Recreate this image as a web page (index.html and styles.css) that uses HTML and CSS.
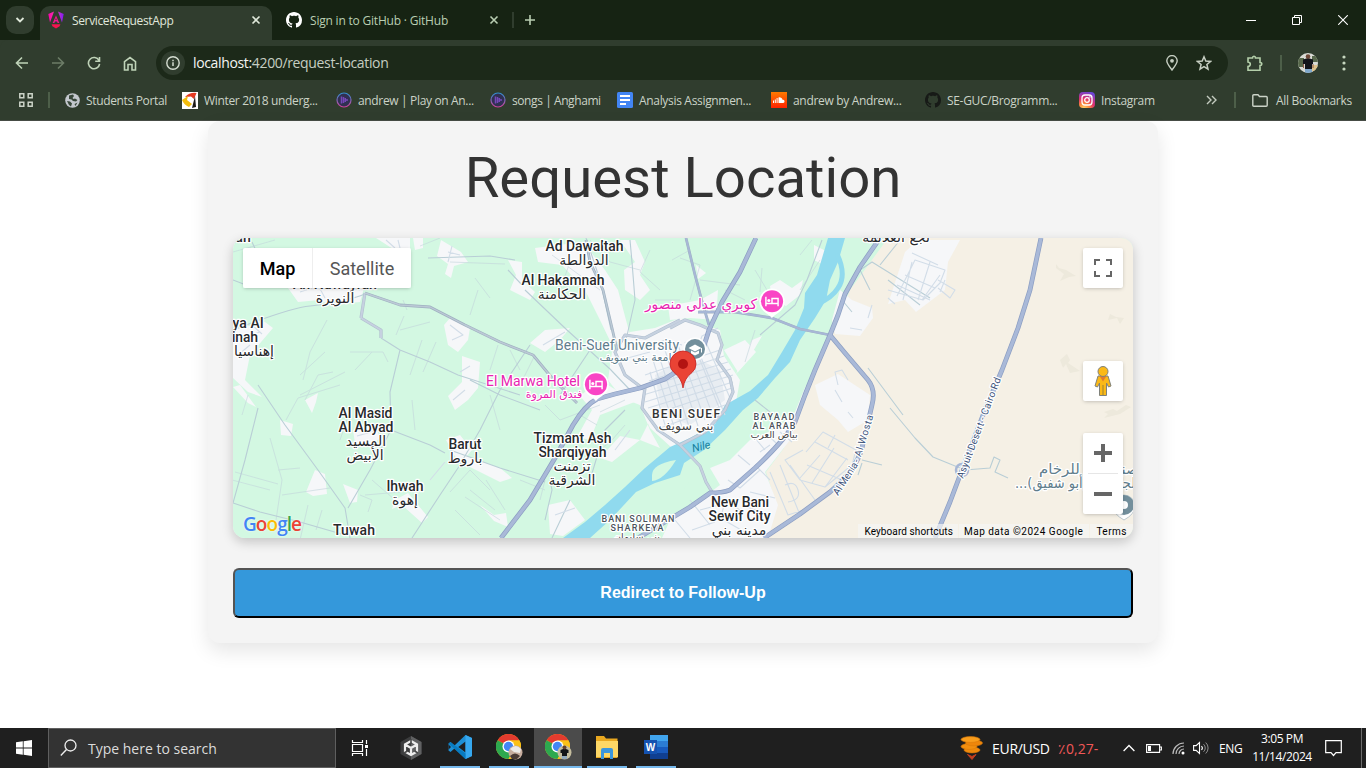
FILE: index.html
```html
<!DOCTYPE html>
<html lang="en">
<head>
<meta charset="utf-8">
<title>ServiceRequestApp</title>
<link rel="stylesheet" href="styles.css">
</head>
<body>
<svg class="defs" width="0" height="0">
  <defs>
    <linearGradient id="ng" x1="0" y1="0" x2="1" y2="0"><stop offset="0" stop-color="#f0a"/><stop offset=".45" stop-color="#f23ab0"/><stop offset="1" stop-color="#7b1cf5"/></linearGradient>
    <linearGradient id="ang" x1="0" y1="0" x2="0" y2="1"><stop offset="0" stop-color="#2f8fd0"/><stop offset="1" stop-color="#d0409c"/></linearGradient>
    <linearGradient id="sc" x1="0" y1="0" x2="0" y2="1"><stop offset="0" stop-color="#ff7a00"/><stop offset="1" stop-color="#ff2200"/></linearGradient>
    <radialGradient id="ig" cx=".3" cy="1.05" r="1.1"><stop offset="0" stop-color="#ffd86b"/><stop offset=".3" stop-color="#fb8b3c"/><stop offset=".6" stop-color="#e0306e"/><stop offset="1" stop-color="#6a45d8"/></radialGradient>
    <symbol id="octocat" viewBox="0 0 16 16"><path d="M8 0C3.58 0 0 3.58 0 8c0 3.54 2.29 6.53 5.47 7.59.4.07.55-.17.55-.38 0-.19-.01-.82-.01-1.49-2.01.37-2.53-.49-2.69-.94-.09-.23-.48-.94-.82-1.13-.28-.15-.68-.52-.01-.53.63-.01 1.08.58 1.23.82.72 1.21 1.87.87 2.33.66.07-.52.28-.87.51-1.07-1.78-.2-3.64-.89-3.64-3.95 0-.87.31-1.59.82-2.15-.08-.2-.36-1.02.08-2.12 0 0 .67-.21 2.2.82.64-.18 1.32-.27 2-.27s1.36.09 2 .27c1.53-1.04 2.2-.82 2.2-.82.44 1.1.16 1.92.08 2.12.51.56.82 1.27.82 2.15 0 3.07-1.87 3.75-3.65 3.95.29.25.54.73.54 1.48 0 1.07-.01 1.93-.01 2.2 0 .21.15.46.55.38A8.01 8.01 0 0 0 16 8c0-4.42-3.58-8-8-8z"/></symbol>
    <symbol id="anghami" viewBox="0 0 16 16"><circle cx="8" cy="8" r="7" fill="#303052" stroke="url(#ang)" stroke-width="1.200"/><path d="M5.500 4.500v7M7.500 5v6M9.300 6v4M11 7v2" stroke="#7648b8" stroke-width="1.500"/></symbol>
    <symbol id="chrome" viewBox="0 0 24 24"><circle cx="12" cy="12" r="12" fill="#fbc116"/><path d="M12 12 1.600 6A12 12 0 0 1 22.400 6z" fill="#e33b2e"/><path d="M1.600 6A12 12 0 0 0 12 24l5-9-5-3z" fill="#2da94f"/><path d="M12 6h10.400A12 12 0 0 1 12 24l5.200-9z" fill="#fbc116"/><circle cx="12" cy="12" r="5.800" fill="#fff"/><circle cx="12" cy="12" r="4.500" fill="#4286f5"/></symbol>
    <symbol id="bed" viewBox="-12 -12 24 28"><path d="M0 15.500C-2 11.500-11.500 9.500-11.500 0a11.500 11.500 0 0 1 23 0C11.500 9.500 2 11.500 0 15.500z" fill="#fff"/><circle r="10" fill="#f945c5"/><path d="M-5.500-4V4.500M-5.500 2H5.500V4.500M5.500 2V-2.500H0V2" fill="none" stroke="#fff" stroke-width="1.300"/><circle cx="-2.900" cy="-.7" r="1.400" fill="#fff"/></symbol>
  </defs>
</svg>

<header class="browser">
  <div class="tabstrip">
    <div class="tabsearch"><svg width="10" height="10" viewBox="0 0 10 10"><path d="M1.500 3 5 6.500 8.500 3" fill="none" stroke="#dfe8da" stroke-width="1.800"/></svg></div>
    <div class="tab active">
      <svg width="16" height="18" viewBox="0 0 16 18"><path d="M.3 3 6 .5 2 11.500zM15.700 3 10 .5 14 11.500z" fill="url(#ng)"/><path d="M8 4.500 11.300 12H9.600L9 10.500H7L6.400 12H4.700zM8 7l-.7 2h1.400z" fill="#f0178f"/><path d="M3.600 13.300h8.800l-.8 2L8 17.500 4.400 15.300z" fill="#f51450"/></svg>
      <span class="tabtitle t1">ServiceRequestApp</span>
      <svg class="close" width="10" height="10" viewBox="0 0 10 10"><path d="M1.500 1.500l7 7M8.500 1.500l-7 7" stroke="#dfe8da" stroke-width="1.600"/></svg>
    </div>
    <div class="tab second">
      <svg width="16" height="16" fill="#fff"><use href="#octocat"/></svg>
      <span class="tabtitle t2">Sign in to GitHub · GitHub</span>
      <svg class="close" width="10" height="10" viewBox="0 0 10 10"><path d="M1.500 1.500l7 7M8.500 1.500l-7 7" stroke="#b9ceb2" stroke-width="1.600"/></svg>
    </div>
    <div class="newtab"><svg width="12" height="12" viewBox="0 0 12 12"><path d="M6 1v10M1 6h10" stroke="#b9ceb2" stroke-width="1.600"/></svg></div>
    <div class="winbtns">
      <svg width="10" height="12" viewBox="0 0 10 12"><path d="M0 6.500h10" stroke="#fff"/></svg>
      <svg width="10" height="10" viewBox="0 0 10 10"><path d="M.5 2.500h7v7h-7zM2.500 2.500v-2h7v7h-2" fill="none" stroke="#fff"/></svg>
      <svg width="10" height="10" viewBox="0 0 10 10"><path d="M.2.2l9.600 9.600M9.800.2.200 9.800" stroke="#fff" stroke-width="1.100"/></svg>
    </div>
  </div>

  <div class="toolbar">
    <div class="nav">
      <svg width="14" height="14" viewBox="0 0 14 14"><path d="M13 7H1.500M7 1.500 1.500 7 7 12.500" fill="none" stroke="#bfd3b8" stroke-width="1.600"/></svg>
      <svg width="14" height="14" viewBox="0 0 14 14"><path d="M1 7h11.500M7 1.500 12.500 7 7 12.500" fill="none" stroke="#6c7c67" stroke-width="1.600"/></svg>
      <svg width="14" height="14" viewBox="0 0 14 14"><path d="M12 4.500A5.600 5.600 0 1 0 12.600 7.800M12.500 1v4.300H8.200" fill="none" stroke="#bfd3b8" stroke-width="1.600"/></svg>
      <svg width="14" height="15" viewBox="0 0 14 15"><path d="M1.500 5.700 7 1.500l5.500 4.200V14H9V8.500H5V14H1.500z" fill="none" stroke="#bfd3b8" stroke-width="1.600"/></svg>
    </div>
    <div class="omnibox">
      <span class="info"><svg width="14" height="14" viewBox="0 0 14 14"><circle cx="7" cy="7" r="6.200" fill="none" stroke="#d5ddd1" stroke-width="1.400"/><path d="M7 6.300V10M7 3.700v1.500" stroke="#d5ddd1" stroke-width="1.500"/></svg></span>
      <span class="url"><b>localhost:</b>4200/request-location</span>
      <svg class="pin" width="12" height="16" viewBox="0 0 12 16"><path d="M6 15C3 11 .8 8.500.8 5.800a5.200 5.200 0 0 1 10.400 0C11.200 8.500 9 11 6 15z" fill="none" stroke="#c6cec2" stroke-width="1.400"/><circle cx="6" cy="5.800" r="1.900" fill="#c6cec2"/></svg>
      <svg width="16" height="16" viewBox="0 0 16 16"><path d="M8 1.800l1.800 4.300 4.700.4-3.600 3 1.100 4.600L8 11.700l-4 2.400 1.100-4.600-3.600-3 4.700-.4z" fill="none" stroke="#c6cec2" stroke-width="1.500"/></svg>
    </div>
    <div class="tools">
      <svg width="17" height="17" viewBox="0 0 17 17"><path d="M2 3H6.500Q6.500 1.300 8 1.300T9.500 3H14V7.500Q15.800 7.500 15.800 9T14 10.500V15.300H2V11.500Q4.300 11 4.300 9.200T2 7z" fill="none" stroke="#b5d0ab" stroke-width="1.600"/></svg>
      <i class="rule"></i>
      <svg class="avatar" width="20" height="20" viewBox="0 0 20 20"><clipPath id="av"><circle cx="10" cy="10" r="10"/></clipPath><g clip-path="url(#av)"><path fill="#d9dbd5" d="M0 0h20v20H0z"/><path d="M0 5h6v9H0zM14 3h6v6h-6z" fill="#57684b"/><path d="M14 12h6v6h-6z" fill="#dfc38b"/><path d="M5 6.500 10 5l5 1.500V11H5z" fill="#11141a"/><path d="M7 9h7v7H7z" fill="#11141a"/><circle cx="10" cy="3.500" r="2.300" fill="#6d4737"/><path d="M7 16h7v4H7z" fill="#7fa8cb"/><path d="M5.500 11v4M15 11v4" stroke="#8c5d49"/></g></svg>
      <svg width="4" height="16" viewBox="0 0 4 16" fill="#c6d6bf"><circle cx="2" cy="2" r="1.600"/><circle cx="2" cy="8" r="1.600"/><circle cx="2" cy="14" r="1.600"/></svg>
    </div>
  </div>

  <nav class="bookmarks">
    <div class="apps"><svg width="14" height="14" viewBox="0 0 14 14"><path d="M.8.8h4v4h-4zM9.200.8h4v4h-4zM.8 9.200h4v4h-4zM9.200 9.200h4v4h-4z" fill="none" stroke="#cbd3c7" stroke-width="1.500"/></svg><i class="rule"></i></div>
    <a class="bm b1"><svg width="15" height="15" viewBox="0 0 15 15"><circle cx="7.500" cy="7.500" r="7.300" fill="#c3c7cd"/><path d="M4 2.500 8 1.500 9 3 7.500 5 8.500 6 10 5.500 12.500 7 11 8.500 8 8 6.500 6.500 4 6zM2 8l3 .5 2 2-1 3L4 12zM9.500 11l3-1.500-2 3.500z" fill="#38473a"/></svg><span>Students Portal</span></a>
    <a class="bm b2"><svg width="16" height="17" viewBox="0 0 16 17"><path d="M0 0h16v17H0z" fill="#fff"/><path d="M3 5Q8 0 14.500 1L12 7 9 4.500z" fill="#e43a22"/><path d="M0 8 6 4 5 8 10 12 7 15Q2 13 0 8z" fill="#f3bd0d"/><path d="M13 4 14 15 10 16 11 12z" fill="#1d1b19"/></svg><span>Winter 2018 underg...</span></a>
    <a class="bm b3"><svg width="16" height="16"><use href="#anghami"/></svg><span>andrew | Play on An...</span></a>
    <a class="bm b4"><svg width="16" height="16"><use href="#anghami"/></svg><span>songs | Anghami</span></a>
    <a class="bm b5"><svg width="16" height="16" viewBox="0 0 16 16"><rect width="16" height="16" rx="1.500" fill="#4285f4"/><path d="M3 4h10M3 8h10M3 12h6" stroke="#fff" stroke-width="1.800"/></svg><span>Analysis Assignmen...</span></a>
    <a class="bm b6"><svg width="16" height="16" viewBox="0 0 16 16"><path d="M0 0h16v16H0z" fill="url(#sc)"/><path d="M2.500 8.500V11M4.300 7.500V11M6.100 6V11" stroke="#fff" stroke-width="1"/><path d="M7.500 5.500a3 3 0 0 1 4 2.300 1.600 1.600 0 0 1 .8 3.200H7.500z" fill="#fff"/></svg><span>andrew by Andrew...</span></a>
    <a class="bm b7"><svg width="16" height="16" fill="#171a17"><use href="#octocat"/></svg><span>SE-GUC/Brogramm...</span></a>
    <a class="bm b8"><svg width="16" height="16" viewBox="0 0 16 16"><rect width="16" height="16" rx="4" fill="url(#ig)"/><rect x="3" y="3" width="10" height="10" rx="3" fill="none" stroke="#fff" stroke-width="1.300"/><circle cx="8" cy="8" r="2.300" fill="none" stroke="#fff" stroke-width="1.300"/><circle cx="10.900" cy="5" r=".7" fill="#fff"/></svg><span>Instagram</span></a>
    <div class="more"><svg width="11" height="10" viewBox="0 0 11 10"><path d="M1 1l4 4-4 4M6 1l4 4-4 4" fill="none" stroke="#c3cbbf" stroke-width="1.400"/></svg><i class="rule"></i></div>
    <a class="bm b9"><svg width="16" height="13" viewBox="0 0 16 13"><path d="M.8 1.800q0-1 1-1H6l1.500 1.700h6.700q1 0 1 1v7.700q0 1-1 1H1.800q-1 0-1-1z" fill="none" stroke="#cbd3c7" stroke-width="1.400"/></svg><span>All Bookmarks</span></a>
  </nav>
</header>

<main class="page">
  <section class="card">
    <h1>Request Location</h1>
    <div class="map">
      <svg class="mapart" width="900" height="300" viewBox="233 238 900 300">
        <path class="green" d="M233 238h900v300H233z"/>
        <path class="desert" d="M888 238H1133V538H762L775 500 766 472 784 448 800 410 812 378 831 336 850 290z"/>
        <g class="urban">
          <path d="M612 352 630 332 655 328 680 318 720 330 724 356 740 380 736 402 722 422 690 450 672 448 650 428 640 405 622 398 608 380z"/>
          <path d="M840 290 852 300 872 308 873 318 860 336 835 334 832 320z"/>
          <path d="M815 385 838 374 870 395 868 420 848 432 838 420 820 405z"/>
          <path d="M806 385 795 412 778 428 750 440 730 460 710 468 720 485 700 500 670 520 662 538H768L778 505 765 472 790 440 802 410z"/>
          <path d="M752 340 736 374 748 360 762 336zM700 300 718 290 716 320 690 318 670 320 668 306z"/>
          <path d="M535 248 583 242 605 270 618 290 630 335 612 345 600 320 585 290 562 265 538 262z"/>
          <path d="M620 240 635 240 645 262 640 275 650 290 640 300 625 290 624 270 635 262z"/>
          <path d="M508 260 522 262 522 280 535 292 530 300 510 290 516 275zM530 343 545 330 570 328 560 340 545 352z"/>
          <path d="M450 318 470 328 468 340 458 352 448 345 444 325z"/>
          <path d="M462 356 480 362 478 388 468 400 455 410 448 396 462 382z"/>
          <path d="M376 238h34v12l-10 3-10-6zM413 238h10v10l-8 2zM441 240l20 12 7 10-14 4-3 12-6-4 3-10-11-8z"/>
          <path d="M288 288 320 272 365 285 360 302 330 305 320 300 298 302z"/>
          <path d="M233 330 265 322 273 328 250 355 245 380 262 397 248 392 233 378zM240 385l16 22-8-4-15-16z"/>
          <path d="M305 400 318 393 316 402 312 413zM280 420l13 4-2 12-10-1zM315 470l10 4 2 20-14 2-7-4zM343 484l15 6-1 12-7 1z"/>
          <path d="M353 430 375 425 380 438 372 445 355 443zM395 500l13-7 20 24-6 6-20-18-10 4zM446 440l14-5 12 15-12 14-6-10z"/>
          <path d="M548 505 570 500 585 520 563 536 550 534zM480 505l14 10 12-2 2 14-14-6zM450 450l50 18 12 10-12 4-40-20z"/>
          <path d="M770 286 780 280 792 288 803 280 800 295 786 306 772 300z"/>
          <path d="M814 245l12 6-2 14-10-5zM696 265l10 8-8 6z"/>
          <path d="M600 380 580 396 592 410 577 437 590 440 600 415 640 400 650 420 640 440 620 436 600 458 612 462 640 440 660 448 650 430 640 405z"/>
          <path d="M905 252 918 240 960 240 948 262 945 290 916 312 905 300 888 304z"/>
          <path d="M724 350 745 340 756 352 738 372z"/>
        </g>
        <path class="green" d="M756 398 784 385 805 365 808 382 790 402 752 412 740 435 715 465 695 475 678 496 670 512 645 525 640 538H575L640 485 690 455z"/>
        <path class="water" d="M828 238H845L838 262 830 280 826 300 815 318 800 340 790 362 775 378 758 398 743 410 725 430 704 450 684 463 680 475 655 483 636 492 610 520 590 538H563L585 522 605 505 625 487 645 468 670 447 690 438 715 424 725 405 750 391 768 375 782 352 795 330 804 308 805 293 817 275z"/>
        <path d="M837 254Q847 275 838 288 832 298 817 304" fill="none" stroke="#90daee" stroke-width="5"/>
        <path class="green" d="M652 475Q652 464 676 460 664 480 652 481z"/>

        <g class="field">
          <path d="M233 252 275 240M250 248 300 265M420 246 440 238M300 375 325 352M327 320 310 352 303 380M248 395 242 415M305 400 318 375 333 372M350 352 383 352 388 362M355 370 372 352M270 438 282 480 276 520M232 480 270 490M235 472 278 484M282 495 330 488M286 420 298 398 340 385M300 395 345 372M360 495 372 500 368 512M365 495 400 492M372 480 395 500M412 400 415 430M340 440 350 410M300 540 308 505M322 510 316 530M278 470 300 468"/>
          <path d="M400 330 430 322M422 340 410 375M404 316 396 335M407 310 403 300M436 342 423 372M450 262 505 264M478 290 470 315M475 278 490 298M510 350 520 370M498 345 490 370M535 355 520 385M490 395 500 430M450 492 470 470 490 490M465 497 500 520M545 405 560 420 600 405M580 415 597 425M486 480 505 510M455 510 480 535M470 490 495 510M520 480 545 490"/>
          <path d="M680 258 700 265 690 300M672 260 690 250M700 280 740 285M755 270 770 295M762 268 760 292M800 255 812 240M725 290 745 300M820 260 800 290M755 330 745 362M590 240 610 262 640 270M650 250 640 272 660 290M680 300 655 300M552 255 600 290M570 262 560 290M545 480 540 500M625 425 612 440 600 450M625 400 600 412"/>
        </g>
        <g class="minor">
          <path d="M252 242 258 255 257 275M233 280 246 285M233 330Q290 308 310 306 345 302 365 294M381 338 400 350 430 362 458 375 520 395M400 350 390 392 391 430M258 385 285 425 318 470 345 508 350 538M391 430 370 470 348 508M258 408 245 460 233 503 260 512 300 522 345 535M412 538 440 495 458 468 480 430 500 390 530 345M430 445 445 453M391 430 430 445M450 450 500 468 545 482M525 290 567 330 610 369 630 390M508 270 522 285M515 260 490 256 428 258M560 395 590 350M540 410 500 395 470 380M545 520 552 490 550 480M552 538 570 500M586 238 600 280 611 330M822 240 807 280 795 305 760 335M590 480 605 430 625 410M630 240 632 262 635 300 626 340"/>
          <path d="M755 400 770 412M890 408 915 438 933 457 960 468M868 368 903 415M880 265 900 240M888 280 920 305M870 290 860 270 872 262 930 298M842 300 852 312M965 470 990 468 994 457 1000 460 995 472 1008 478M862 460 882 465M862 463 858 475"/>
        </g>
        <g class="street">
          <path d="M653 360 675 430M665 350 690 430M678 345 705 420M692 340 720 410M705 340 730 398M645 375 720 350M642 388 728 362M645 402 733 375M652 415 732 388M660 428 725 405M650 372 665 425M700 355 725 415M649 381 724 356M643 395 731 369M648 408 733 382M659 356 683 430M672 347 698 426M685 342 713 416"/>
          <path d="M640 350 665 340 682 345M620 360 650 352M718 328 702 336 695 355M755 438 765 450M738 455 750 465M700 510 730 502 742 512M725 502 720 520M692 530 715 522M728 480 740 488 760 470M755 465 770 480M715 515 750 535M750 492 775 498M742 505 768 515M770 445 760 452M690 500 710 525M675 520 690 538M780 432 792 442M768 435 778 445"/>
          <path d="M806 452 823 432 856 450 852 465 825 487 800 480 785 460 803 450M815 442 848 460M807 465 842 480M800 478 820 455M812 483 834 448M825 487 847 458M835 435 828 448M780 465 792 495 800 515M770 472 788 515 810 508M785 485Q795 480 798 490T788 502M790 465 815 500"/>
          <path d="M872 305 868 318M897 296 915 260 945 270 940 283 923 300 888 290M905 275 935 288M912 262 903 300M930 262 918 300M897 285 930 300M912 253 938 265M922 300 940 275M938 280 955 290 950 298 938 288M945 280 940 292M895 304 888 298"/>
          <path d="M838 385 835 372 842 370 848 380M835 390 842 402M848 412 853 418M850 328 862 330M386 240 395 248M398 240 400 248M448 252 460 255M452 246 448 262M450 325 463 335 452 340M300 292 330 282 360 290M318 285 325 298M236 340 260 332M238 355 250 345M252 325 262 334M357 436 378 430M430 480 445 462M460 372 470 366M453 400 465 390M543 345 565 332M555 515 575 508M630 430 615 450"/>
        </g>
        <path d="M655 375 690 355 720 370 725 400 690 425 662 415z" fill="#cfd9e5" opacity=".35"/>

        <g class="ringcase"><path id="ring" d="M645 388 642 408 658 430 680 445 700 466 706 482 712 492M680 320 645 338 625 335 615 352 625 375 645 390M670 328 685 320 700 325 718 333 722 345 717 360 730 378 733 392 725 410 705 432 680 445M361 318 381 330 381 338M365 293 361 318"/></g>
        <use href="#ring" class="ring"/>
        <g class="case"><path d="M365 293 400 305 430 307 465 325 500 342 533 355 552 378 577 403M586 240 590 262 603 290 612 328 617 350M686 238 695 275 703 305 709 325M698 312 735 312 772 318 800 329 830 335"/></g>
        <g class="secondary"><path d="M365 293 400 305 430 307 465 325 500 342 533 355 552 378 577 403M586 240 590 262 603 290 612 328 617 350"/></g>
        <g class="thinway"><path d="M686 238 695 275 703 305 709 325M698 312 735 312 772 318 800 329 830 335"/></g>
        <g class="hwcase"><path id="hw" d="M756 238 740 272 722 302 709 330 702 352 688 364 665 379 640 388 615 394 597 399Q585 405 573 425L555 458 530 500 501 538M880 238 860 267 845 294 838 315 830 335 815 370 805 395 795 422Q785 440 755 468L730 490Q722 493 710 493L690 507 670 519 638 538M830 335 845 353 868 380Q876 390 872 405L862 448Q856 470 830 492L800 514 764 538M1041 238 1030 290 1018 328 1002 370 985 410 962 470 950 502 935 538"/></g>
        <use href="#hw" class="highway"/>
        <circle cx="962" cy="470" r="6" fill="none" stroke="#a7b7d6" stroke-width="2.500"/>
        <g class="relief"><path d="M1056 264l3 4 7 2 10 6-7 1-9 4 4-7-8-6zM1110 314l6 3 8 1-4 6-3-6-9 2zM1060 360l7-6 3 6-2 3 12 8-10 2-4-9-3 4zM1104 412l9-3 4 2 9-6 5 2-11 7-16 4 4-4z"/></g>

        <g class="place">
          <text x="243" y="242">ah</text>
          <text x="335" y="289" textLength="84" lengthAdjust="spacingAndGlyphs">An Nuwayrah</text>
          <text class="ar" x="335" y="303">النويرة</text>
          <text x="248" y="328" textLength="31">ya Al</text><text x="245" y="342" textLength="26">inah</text>
          <text class="ar" x="254" y="356">إهناسيا</text>
          <text x="584.500" y="251" textLength="78">Ad Dawaltah</text><text class="ar" x="584" y="265">الدوالطة</text>
          <text x="563" y="285" textLength="83">Al Hakamnah</text><text class="ar" x="562" y="299">الحكامنة</text>
          <text x="365.500" y="418" textLength="54">Al Masid</text><text x="366" y="432" textLength="55">Al Abyad</text>
          <text class="ar" x="366" y="446">المسيد</text><text class="ar" x="365" y="460">الأبيض</text>
          <text x="465" y="449" textLength="33">Barut</text><text class="ar" x="465" y="463">باروط</text>
          <text x="405" y="491" textLength="37">Ihwah</text><text class="ar" x="405" y="505">إهوة</text>
          <text x="354" y="535" textLength="42">Tuwah</text>
          <text x="572.500" y="443" textLength="78">Tizmant Ash</text><text x="572.500" y="457" textLength="68">Sharqiyyah</text>
          <text class="ar" x="572" y="471">تزمنت</text><text class="ar" x="572" y="485">الشرقية</text>
          <text x="740" y="507" textLength="58">New Bani</text><text x="739.500" y="521" textLength="62">Sewif City</text><text class="ar" x="739" y="535">مدينه بني</text>
          <text class="ar" x="896" y="242">نجع العلائمة</text>
        </g>
        <g class="district">
          <text x="686" y="418" class="big" textLength="68">BENI SUEF</text><text class="ar" x="686" y="430">بني سويف</text>
          <text x="774" y="420" textLength="41">BAYAAD</text><text x="774" y="429" textLength="43">AL ARAB</text><text class="ar sm" x="774" y="438">بياض العرب</text>
          <text x="638" y="522" textLength="73">BANI SOLIMAN</text><text x="637" y="531" textLength="53">SHARKEYA</text><text class="ar sm" x="637" y="540">بني سليمان</text>
        </g>
        <text class="river" x="702" y="450" transform="rotate(-14 702 450)">Nile</text>
        <g class="roadname">
          <text transform="translate(838 496) rotate(-57)" textLength="37">Al Menia</text>
          <text transform="translate(859 463) rotate(-73)" textLength="49">- Al Wosta</text>
          <text transform="translate(963 479) rotate(-69)" textLength="59">Asyuit Desert</text>
          <text transform="translate(985 421) rotate(-69)" textLength="45">- Cairo Rd</text>
        </g>
        <g class="poi">
          <text class="pink ar2" x="701" y="309" textLength="112" lengthAdjust="spacingAndGlyphs">كوبري عدلي منصور</text>
          <text class="pink" x="533" y="386" textLength="94">El Marwa Hotel</text><text class="pink ar" x="554" y="398">فندق المروة</text>
          <text class="slate" x="617" y="350" textLength="124">Beni-Suef University</text><text class="slate ar" x="639" y="361">جامعة بني سويف</text>
          <text class="slate ar2" x="1093" y="474" textLength="108" lengthAdjust="spacingAndGlyphs">مصنع مكة للرخام</text>
          <text class="slate ar2" x="1080" y="488" textLength="130" lengthAdjust="spacingAndGlyphs" direction="rtl">والجرانيت (أبو شفيق)...</text>
        </g>
        <use href="#bed" x="758.500" y="288" width="27" height="31"/>
        <use href="#bed" x="582.500" y="371" width="27" height="31"/>
        <circle cx="695" cy="349" r="11.500" fill="#fff"/><circle cx="695" cy="349" r="10" fill="#738f9c"/>
        <path d="M688.500 348 695 344.500 701.500 348 695 351.500zM691 350.500v3l4 2 4-2v-3l-4 2z" fill="#fff"/><path d="M701.500 348v4.500" stroke="#fff"/>
        <path d="M1124 520Q1113 514 1113 506a11 11 0 0 1 22 0Q1135 514 1124 520z" fill="#fff" stroke="#bbc7cc"/><circle cx="1124" cy="505" r="7" fill="#fff" stroke="#738f9c" stroke-width="6"/>
        <path d="M683 388Q681.500 378 674 372.500 670 369 670 364a13 13 0 0 1 26 0Q696 369 692 372.500 684.500 378 683 388z" fill="#ea4335" stroke="#c5221f" stroke-width=".8"/><circle cx="683" cy="364" r="5" fill="#b31412"/>
      </svg>
      <div class="controls">
        <div class="maptype"><button class="on">Map</button><button>Satellite</button></div>
        <div class="side">
          <div class="ctl"><svg width="18" height="18" viewBox="0 0 18 18"><path d="M1 6V1h5M12 1h5v5M17 12v5h-5M6 17H1v-5" fill="none" stroke="#666" stroke-width="2"/></svg></div>
          <div class="ctl peg"><svg width="20" height="32" viewBox="0 0 20 32"><path d="M5 11h10l3 10-2.500 1-2-4V30.500H6.500V18l-2 4L2 21z" fill="#fbb917" stroke="#7f817a"/><path d="M10 20v10" stroke="#9a8332"/><path d="M6.500 11h7L10 16.500z" fill="#e37b2d"/><circle cx="10" cy="6.500" r="5" fill="#fbb917" stroke="#7f817a"/></svg></div>
          <div class="zoomctl"><div><svg width="18" height="18" viewBox="0 0 18 18"><path d="M9 0v18M0 9h18" stroke="#666" stroke-width="4"/></svg></div><div><svg width="18" height="18" viewBox="0 0 18 18"><path d="M0 9h18" stroke="#666" stroke-width="4"/></svg></div></div>
        </div>
        <div class="google"><span class="gb">G</span><span class="gr">o</span><span class="gy">o</span><span class="gb">g</span><span class="gg">l</span><span class="gr">e</span></div>
        <div class="legal"><span class="k">Keyboard shortcuts</span><span class="d">Map data ©2024 Google</span><span class="tm">Terms</span></div>
      </div>
    </div>
    <button class="redirect">Redirect to Follow-Up</button>
  </section>
</main>

<footer class="taskbar">
  <div class="start"><svg width="16" height="16" viewBox="0 0 16 16"><path d="M0 2.200 6.800 1.300V7.600H0zM7.600 1.200 16 0V7.600H7.600zM0 8.400H6.800V14.700L0 13.800zM7.600 8.400H16V16L7.600 14.800z" fill="#fff"/></svg></div>
  <div class="search"><svg width="17" height="18" viewBox="0 0 17 18"><circle cx="10.500" cy="6.500" r="5.500" fill="none" stroke="#eee" stroke-width="1.300"/><path d="M6.500 10.500.8 16.500" stroke="#eee" stroke-width="1.400"/></svg><span>Type here to search</span></div>
  <div class="app taskview"><svg width="18" height="16" viewBox="0 0 18 16"><path d="M1.500 4.500h10v7h-10zM1.500 0v2.500h10V0M1.500 16v-2.500h10V16M15.500 0v4M15.500 9v7" fill="none" stroke="#fff" stroke-width="1.200"/><path d="M14 5h3v3h-3z" fill="#fff"/></svg></div>
  <div class="app unity"><svg width="22" height="24" viewBox="0 0 22 24"><path d="M11 0 21.500 6V18L11 24 .5 18V6z" fill="#3c3d3e"/><path d="M11 0 21.500 6V18L11 24z" fill="#606162"/><path d="M11 5 17 8.500V15.500L11 19 5 15.500V8.500zM11 12v7M11 12 5 8.500M11 12 17 8.500" fill="none" stroke="#eee" stroke-width="2.200"/><path d="M11 3v5M4 17l3.500-2M18 17l-3.500-2" stroke="#484949" stroke-width="1.600"/></svg></div>
  <div class="app run"><svg width="24" height="24" viewBox="0 0 24 24"><path d="M17.500 0 24 3V21L17.500 24 6.500 13.500 2.500 17 .5 15.500V8.500L2.500 7 6.500 10.500zM17.500 6.500 10.300 12 17.500 17.500z" fill="#1e8fd5"/><path d="M.5 9.500 3 12 .5 14.500z" fill="#1f1f1f"/><path d="M17.500 0 24 3V21L17.500 24z" fill="#36a8ef"/><path d="M2.500 7 17.500 18.500V24L.5 8.500z" fill="#087bc0"/></svg></div>
  <div class="app run"><svg width="27" height="26" viewBox="0 0 27 26"><use href="#chrome" width="25" height="25"/><circle cx="19.500" cy="18.500" r="7" fill="#c6ad9e"/><path d="M14 15q6-6 11 0l-1 4-6-1z" fill="#eceae8"/><path d="M14 22q5-5 10 0l-3 3h-5z" fill="#493a35"/></svg></div>
  <div class="app run current"><svg width="27" height="26" viewBox="0 0 27 26"><use href="#chrome" width="25" height="25"/><circle cx="19.500" cy="18.500" r="7" fill="#c5bd9e"/><path d="M15.500 16 18 15h3l2.500 1v3H22v4h-5v-4h-1.500z" fill="#121417"/><circle cx="19.500" cy="13.500" r="2" fill="#62412f"/><path d="M17 22h5v3h-5z" fill="#91a9bd"/></svg></div>
  <div class="app run folder"><svg width="22" height="23" viewBox="0 0 22 23"><path d="M0 0h8l2 2.500h11.500V22H0z" fill="#e9a820"/><path d="M0 5h22v16H0z" fill="#fdd766"/><path d="M5 23v-9q0-2 2-2h8q2 0 2 2v9h-3v-6H8v6z" fill="#3b96dc"/></svg></div>
  <div class="app run word"><svg width="25" height="24" viewBox="0 0 25 24"><path d="M6 0h18v24H6z" fill="#185abd"/><path d="M6 0h18v6H6z" fill="#41a5ee"/><path d="M6 6h18v6H6z" fill="#2b7cd3"/><path d="M6 18h18v6H6z" fill="#103f91"/><path d="M0 5h13v14H0z" fill="#1552b0"/><text x="6.500" y="16" class="w">W</text></svg></div>
  <div class="tray">
    <svg class="coin" width="23" height="24" viewBox="0 0 23 24"><g stroke="#d87808" stroke-width=".6"><ellipse cx="12" cy="14" rx="8" ry="2.900" fill="#ef8a0c"/><ellipse cx="9" cy="10.500" rx="8" ry="2.900" fill="#f28f0f"/><ellipse cx="14" cy="7" rx="8.500" ry="2.900" fill="#ee860b"/><ellipse cx="10.500" cy="3.500" rx="9.500" ry="2.900" fill="#f99d1c"/></g><path d="M7.500 18.500l4.500 2 4-2-4 5z" fill="#c5401f" stroke="#c5401f"/></svg>
    <span class="eur">EUR/USD</span><span class="pct">٪0,27-</span>
    <svg class="chev" width="12" height="8" viewBox="0 0 12 8"><path d="M.6 7 6 1.500 11.400 7" fill="none" stroke="#fff" stroke-width="1.300"/></svg>
    <svg class="bat" width="16" height="9" viewBox="0 0 16 9"><path d="M.6.6h13v7.800H.6zM14 3h1.400v3H14" fill="none" stroke="#fff" stroke-width="1.100"/><path d="M2 2h3v5H2z" fill="#fff"/></svg>
    <svg class="wifi" width="13" height="13" viewBox="0 0 13 13"><g fill="none" stroke="#bbb" stroke-width="1.200"><path d="M1 12A11 11 0 0 1 12 1M4 12A8 8 0 0 1 12 4M7 12A5 5 0 0 1 12 7"/></g><circle cx="11" cy="11" r="1.500" fill="#fff"/></svg>
    <svg class="vol" width="16" height="14" viewBox="0 0 16 14"><path d="M.6 4.600h2.500L6.500 1.500v11L3.100 9.400H.6zM8.500 5a3 3 0 0 1 0 4" fill="none" stroke="#fff" stroke-width="1.100"/><path d="M10.500 3.200a5 5 0 0 1 0 7.600M12.700 1.500a7.500 7.500 0 0 1 0 11" fill="none" stroke="#8d8d8d"/></svg>
    <span class="lang">ENG</span>
    <div class="clock"><span>3:05 PM</span><span class="date">11/14/2024</span></div>
    <svg class="note" width="17" height="17" viewBox="0 0 17 17"><path d="M.7.700h15.600v12H11L8.500 15.500 6 12.700H.7z" fill="none" stroke="#fff" stroke-width="1.200"/></svg>
    <i class="desk"></i>
  </div>
</footer>
</body>
</html>
```
FILE: styles.css
```css
* { box-sizing: border-box; }
body { margin: 0; width: 1366px; height: 768px; overflow: hidden; display: flex; flex-direction: column; background: #fff; font-family: "Open Sans", "Noto Sans", sans-serif; }
svg { display: block; flex: none; }
.defs { position: absolute; }
button { font: inherit; border: 0; padding: 0; margin: 0; }
.rule { width: 2px; height: 16px; background: #4d5f49; flex: none; }

/* browser chrome */
.browser { height: 121px; flex: none; background: #303d2e; border-bottom: 1px solid #464c45; }
.tabstrip { height: 40px; background: #162313; display: flex; align-items: center; padding-left: 6px; }
.tabsearch { width: 28px; height: 28px; border-radius: 10px; background: #303d2e; display: grid; place-items: center; }
.tab { display: flex; align-items: center; font-size: 12px; white-space: nowrap; }
.tab.active { margin-left: 6px; align-self: flex-end; width: 232px; height: 34px; padding: 0 11px 6px 8px; border-radius: 10px 10px 0 0; background: #303d2e; color: #e0e8dc; }
.tab.second { width: 240px; padding-left: 14px; padding-right: 13px; color: #b9ceb2; }
.tabtitle { margin-left: 8px; }
.t1 { letter-spacing: -.36px; }
.t2 { letter-spacing: -.2px; }
.close { margin-left: auto; }
.newtab { border-left: 2px solid #303d2e; height: 16px; display: flex; align-items: center; padding-left: 10px; }
.winbtns { margin-left: auto; display: flex; align-items: center; gap: 36px; padding-right: 18px; }
.browser .toolbar { height: 46px; display: flex; align-items: center; background: #303d2e; box-shadow: 0 -6px 0 #162313; border-radius: 8px 8px 0 0; }
.browser .toolbar { box-shadow: none; }
.nav { width: 156px; display: flex; gap: 22px; padding-left: 15px; }
.omnibox { width: 1072px; height: 34px; border-radius: 17px; background: #1c2919; display: flex; align-items: center; padding: 0 16px 0 5px; }
.info { width: 24px; height: 24px; border-radius: 50%; background: #303d2e; display: grid; place-items: center; }
.url { margin: -1px 0 0 8px; font-size: 14px; letter-spacing: -.35px; color: #c6cec2; }
.url b { font-weight: 400; color: #f4f6f3; }
.pin { margin-left: auto; margin-right: 18px; }
.tools { display: flex; align-items: center; padding-left: 18px; }
.tools .rule { margin-left: 17px; }
.avatar { margin: 0 24px 0 16px; }
.bookmarks { height: 28px; display: flex; align-items: center; color: #cbd3c7; font-size: 12px; }
.apps { width: 65px; padding-left: 19px; display: flex; align-items: center; }
.apps .rule { margin-left: 15px; }
.bm { display: flex; align-items: center; gap: 6px; white-space: nowrap; letter-spacing: -.32px; flex: none; }
.b1 { width: 117px; } .b2 { width: 154px; } .b3 { width: 154px; } .b4 { width: 127px; }
.b5 { width: 154px; } .b6 { width: 154px; } .b7 { width: 154px; } .b8 { width: 127px; }
.b9 { gap: 8px; }
.b1, .b2, .b3 { letter-spacing: -.34px; }
.b4 { letter-spacing: -.42px; }
.more { width: 46px; display: flex; align-items: center; justify-content: space-between; padding-right: 16px; }

/* application */
.page { flex: 1; display: flex; justify-content: center; align-items: flex-start; }
.card { width: 950px; height: 522px; padding: 26px 25px; background: #f4f4f4; border-radius: 12px; box-shadow: 0 8px 20px rgba(0, 0, 0, .1); font-family: Roboto, sans-serif; }
h1 { margin: 0 0 27px; height: 64px; line-height: 62px; font-size: 56.3px; font-weight: 400; color: #333; text-align: center; }
.map { display: grid; width: 900px; height: 300px; border-radius: 12px; overflow: hidden; box-shadow: 0 4px 12px rgba(0, 0, 0, .2); }
.map > * { grid-area: 1 / 1; }
.controls { display: grid; height: 300px; grid-template: 1fr 26px / 1fr 50px; z-index: 1; }
.maptype { grid-area: 1 / 1; display: flex; margin: 10px; width: 168px; height: 40px; box-shadow: 0 1px 4px -1px rgba(0, 0, 0, .3); }
.maptype button { width: 98px; background: #fff; border-radius: 0 2px 2px 0; font-size: 18px; color: #565656; }
.maptype button.on { width: 70px; color: #000; font-weight: 500; border-right: 1px solid #eee; border-radius: 2px 0 0 2px; }
.side { grid-column: 2; grid-row: 1 / 3; padding: 10px 10px 0 0; display: flex; flex-direction: column; }
.ctl, .zoomctl { width: 40px; background: #fff; border-radius: 2px; box-shadow: 0 1px 4px -1px rgba(0, 0, 0, .3); }
.ctl { height: 40px; flex: none; display: grid; place-items: center; }
.peg { margin: 73px 0 32px; }
.zoomctl { height: 81px; flex: none; }
.zoomctl div { height: 40px; display: grid; place-items: center; }
.zoomctl div + div { height: 41px; margin: 0 5px; border-top: 1px solid #e6e6e6; }
.google { grid-area: 2 / 1; align-self: end; padding: 0 0 2px 10px; font: 500 19px/24px "Open Sans", sans-serif; letter-spacing: -.95px; text-shadow: 0 0 2px #fff; }
.google span { font-weight: 600; }
.gb { color: #4285f4; } .gr { color: #ea4335; } .gy { color: #fbbc05; } .gg { color: #34a853; }
.legal { grid-column: 1 / 3; grid-row: 2; align-self: end; justify-self: end; display: flex; gap: 1px; height: 14px; font-size: 10px; line-height: 15px; color: #000; white-space: nowrap; }
.legal span { background: rgba(245, 245, 245, .7); padding: 0 6px; }
.legal .k { letter-spacing: 0; padding-right: 5px; }
.legal .d { letter-spacing: .5px; padding-left: 5px; }
.legal .tm { letter-spacing: .5px; }
.legal .k { letter-spacing: .1px; }
.redirect { display: block; width: 900px; height: 50px; margin-top: 30px; background: #3498db; color: #fff; border: 2px outset #000; border-radius: 6px; font: 700 16px "Liberation Sans", Arial, sans-serif; }

/* map drawing */
.green { fill: #d3f8e2; } .desert { fill: #f5f0e5; } .urban { fill: #f6f7f9; } .water { fill: #90daee; }
.field, .minor, .street, .secondary, .thinway, .highway, .case, .hwcase, .ring, .ringcase { fill: none; stroke-linejoin: round; }
.field { stroke: #c3d5dc; stroke-width: 1; opacity: .6; }
.minor { stroke: #b9ced6; stroke-width: 1.1; }
.street { stroke: #d2dde8; stroke-width: 1.1; }
.ringcase { stroke: #b0bfce; stroke-width: 3.2; } .ring { stroke: #c6d1e0; stroke-width: 2; }
.case { stroke: #9fb0c0; stroke-width: 2.8; } .secondary { stroke: #bccad6; stroke-width: 1.4; }
.thinway { stroke: #a7b7d6; stroke-width: 2; }
.hwcase { stroke: #8c9ec2; stroke-width: 4.8; }
.highway { stroke: #a9b9d8; stroke-width: 3.4; }
.relief { fill: #ede9dc; }
.mapart text { font-family: Roboto, sans-serif; text-anchor: middle; paint-order: stroke; stroke: #fff; stroke-width: 2.5px; stroke-linejoin: round; }
.place text { font-size: 14px; font-weight: 500; fill: #27292c; }
.mapart text.ar { font-family: "DejaVu Sans", "Noto Sans", sans-serif; font-weight: 400; font-size: 14px; }
.district text { font-size: 9px; font-weight: 500; fill: #4c545c; }
.district text.big { font-size: 12px; fill: #333; }
.mapart .district text.ar { font-size: 12.5px; fill: #444; }
.mapart .district text.sm { font-size: 9.5px; }
.mapart text.river { font-size: 11px; font-style: italic; fill: #147f9c; stroke: none; }
.roadname text { font-size: 10px; fill: #41557b; text-anchor: start; }
.mapart .roadname text { text-anchor: start; }
.poi text { font-size: 14px; }
.mapart .pink { fill: #e824b0; } .mapart .slate { fill: #5f7d8c; }
.mapart .poi text.ar { font-size: 11px; }
.mapart text.ar2 { font-family: "DejaVu Sans", sans-serif; font-size: 14px; }

/* taskbar */
.taskbar { height: 40px; flex: none; display: flex; background: #1f1f1f; color: #fff; }
.start { width: 48px; display: grid; place-items: center; }
.search { width: 288px; border: 1px solid #5f5f5f; background: #333; display: flex; align-items: center; padding-left: 11px; gap: 11px; font-size: 14px; letter-spacing: 0; color: #dcdcdc; }
.app { width: 49px; height: 40px; display: grid; place-items: center; }
.taskview { width: 48px; }
.unity { width: 53px; }
.run { width: 40px; margin-left: 3px; margin-right: 6px; border-bottom: 2px solid #76b9ed; }
.current { width: 48px; margin: 0 5px 0 -1px; background: #4b4b4b; }
.folder { width: 40px; margin-left: 0; margin-right: 9px; }
.word { margin-left: 0; }
.w { font: 700 10px "Liberation Sans", sans-serif; fill: #fff; text-anchor: middle; }
.tray { margin-left: auto; width: 406px; display: flex; align-items: center; white-space: nowrap; }
.eur { width: 66px; margin-left: 9px; font-size: 14px; letter-spacing: -.3px; }
.pct { width: 65px; font-size: 14px; color: #f25858; letter-spacing: -.3px; }
.chev { margin-right: 11px; } .bat { margin-right: 10px; } .wifi { margin-right: 8px; }
.lang { width: 33px; margin-left: 10px; font-size: 12px; letter-spacing: -.3px; }
.clock { width: 60px; text-align: center; font-size: 12px; line-height: 18px; letter-spacing: -.4px; display: flex; flex-direction: column; }
.note { margin-left: 13px; }
.desk { width: 1px; height: 40px; background: #6b6b6b; margin-left: 19px; }
```
